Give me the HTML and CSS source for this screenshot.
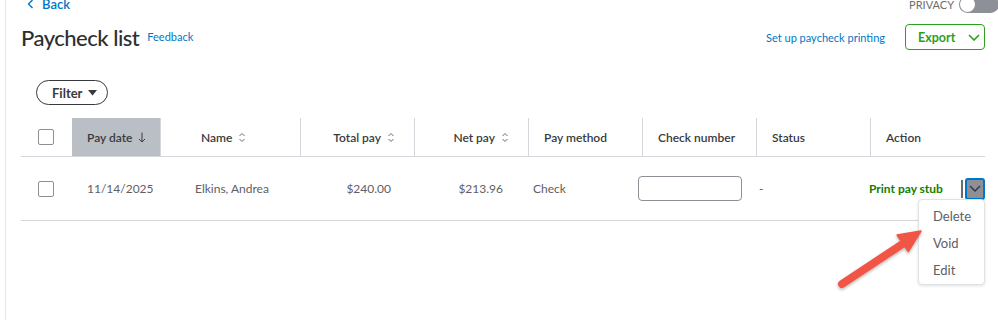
FILE: index.html
```html
<!DOCTYPE html>
<html lang="en">

<head>
    <meta charset="UTF-8">
    <meta name="viewport" content="width=device-width, initial-scale=1.0">
    <title>Paycheck list</title>
    <link rel="stylesheet" href="styles.css">
</head>

<body>

    <div class="page">

        <div class="topbar">
            <a href="#" class="back">
                <svg width="7" height="10" viewBox="0 0 7 10"><path d="M5.5 1 L1.5 5 L5.5 9" fill="none" stroke="#0077c5" stroke-width="1.4"/></svg>
                Back
            </a>
            <div class="privacy">
                <span>PRIVACY</span>
                <div class="toggle"><div class="knob"></div></div>
            </div>
        </div>

        <div class="title-row">
            <h1>Paycheck list</h1>
            <a href="#" class="feedback">Feedback</a>
            <a href="#" class="setup">Set up paycheck printing</a>
            <button class="export">Export
                <svg width="12" height="7" viewBox="0 0 12 7"><path d="M1 1 L6 6 L11 1" fill="none" stroke="#2ca01c" stroke-width="1.6"/></svg>
            </button>
        </div>

        <button class="filter">Filter
            <svg width="9" height="6" viewBox="0 0 9 6"><path d="M0 0 H9 L4.5 5.5 Z" fill="#393a3d"/></svg>
        </button>

        <div class="table">
            <div class="thead">
                <div class="th"><span class="checkbox"></span></div>
                <div class="th sorted">Pay date
                    <svg width="8" height="11" viewBox="0 0 8 11"><path d="M4 0.5 V10 M1 7 L4 10 L7 7" fill="none" stroke="#393a3d" stroke-width="1"/></svg>
                </div>
                <div class="th line name-h">Name
                    <svg class="sort" width="8" height="11" viewBox="0 0 8 11"><path d="M1.5 4 L4 1.5 L6.5 4 M1.5 7 L4 9.5 L6.5 7" fill="none" stroke="#6b6c72" stroke-width="1"/></svg>
                </div>
                <div class="th line right">Total pay
                    <svg class="sort" width="8" height="11" viewBox="0 0 8 11"><path d="M1.5 4 L4 1.5 L6.5 4 M1.5 7 L4 9.5 L6.5 7" fill="none" stroke="#6b6c72" stroke-width="1"/></svg>
                </div>
                <div class="th line right">Net pay
                    <svg class="sort" width="8" height="11" viewBox="0 0 8 11"><path d="M1.5 4 L4 1.5 L6.5 4 M1.5 7 L4 9.5 L6.5 7" fill="none" stroke="#6b6c72" stroke-width="1"/></svg>
                </div>
                <div class="th line">Pay method</div>
                <div class="th line">Check number</div>
                <div class="th line">Status</div>
                <div class="th line">Action</div>
            </div>

            <div class="trow">
                <div class="td"><span class="checkbox"></span></div>
                <div class="td">11/14/2025</div>
                <div class="td">Elkins, Andrea</div>
                <div class="td right">$240.00</div>
                <div class="td right">$213.96</div>
                <div class="td">Check</div>
                <div class="td"><input type="text" class="check-input"></div>
                <div class="td">-</div>
                <div class="td action">
                    <a href="#" class="print">Print pay stub</a>
                    <span class="divider"></span>
                    <button class="more">
                        <svg width="12" height="7" viewBox="0 0 12 7"><path d="M1 1 L6 6 L11 1" fill="none" stroke="#393a3d" stroke-width="1.5"/></svg>
                    </button>
                </div>
            </div>
        </div>

    </div>

    <div class="menu">
        <div class="menu-item">Delete</div>
        <div class="menu-item">Void</div>
        <div class="menu-item">Edit</div>
    </div>

    <svg class="arrow" width="100" height="75" viewBox="0 0 100 75">
        <defs>
            <filter id="sh" x="-20%" y="-20%" width="140%" height="140%">
                <feDropShadow dx="0" dy="1.5" stdDeviation="1.5" flood-color="#000" flood-opacity="0.3"/>
            </filter>
        </defs>
        <g filter="url(#sh)" fill="#f05545" stroke="#f05545">
            <path d="M12 62 L74 21" stroke-width="8" stroke-linecap="round"/>
            <path d="M91 9 L78.3 29.6 L67.1 13 Z" stroke-width="1.5" stroke-linejoin="round"/>
        </g>
    </svg>

</body>

</html>
```

FILE: styles.css
```css
body {
    margin: 0;
    font-family: Lato, "Open Sans", sans-serif;
    background-color: #fff;
    color: #393a3d;
    position: relative;
    height: 328px;
    overflow: hidden;
}

.page {
    margin-left: 5px;
    border-left: 1px solid #e3e5e8;
    padding-left: 15px;
    padding-right: 13px;
    height: 328px;
}

.topbar {
    display: flex;
    justify-content: space-between;
    align-items: center;
    height: 24px;
    margin-top: -8px;
}

.back {
    display: flex;
    align-items: center;
    gap: 8px;
    margin-left: 6px;
    font-size: 13px;
    font-weight: 600;
    color: #0077c5;
    text-decoration: none;
}

.privacy {
    display: flex;
    align-items: center;
    gap: 5px;
    margin-right: -14px;
    font-size: 11px;
    color: #6b6c72;
}

.toggle {
    width: 40px;
    height: 17px;
    border-radius: 9px;
    background-color: #8d9096;
    position: relative;
}

.knob {
    position: absolute;
    left: 1px;
    top: 1px;
    width: 15px;
    height: 15px;
    border-radius: 50%;
    background-color: #fff;
}

.title-row {
    display: flex;
    align-items: center;
    height: 26px;
    margin-top: 8px;
}

.title-row h1 {
    margin: 0;
    font-size: 22px;
    font-weight: 500;
    letter-spacing: -0.5px;
    color: #2d2e31;
}

.feedback {
    margin-left: 8px;
    margin-top: -1px;
    font-size: 11px;
    color: #0077c5;
    text-decoration: none;
}

.setup {
    margin-left: auto;
    margin-right: 20px;
    font-size: 11px;
    color: #0077c5;
    text-decoration: none;
}

.export {
    display: flex;
    align-items: center;
    gap: 13px;
    box-sizing: border-box;
    width: 80px;
    height: 26px;
    padding: 0 0 0 12px;
    border: 1.5px solid #2ca01c;
    border-radius: 4px;
    background-color: #fff;
    color: #2ca01c;
    font-family: inherit;
    font-size: 12.5px;
    font-weight: 700;
}

.filter {
    display: flex;
    align-items: center;
    gap: 6px;
    box-sizing: border-box;
    margin-top: 30px;
    margin-left: 15px;
    width: 72px;
    height: 25px;
    padding: 0 0 0 15px;
    border: 1.5px solid #393a3d;
    border-radius: 13px;
    background-color: #fff;
    color: #393a3d;
    font-family: inherit;
    font-size: 13px;
    font-weight: 700;
}

.table {
    margin-top: 13px;
    width: 964px;
}

.thead {
    display: grid;
    grid-template-columns: 51px 88px 140px 114px 114px 114px 114px 114px 115px;
    height: 38px;
    border-bottom: 1px solid #d4d7dc;
}

.th {
    display: flex;
    align-items: center;
    gap: 6px;
    padding-left: 15px;
    font-size: 12px;
    font-weight: 600;
    color: #393a3d;
}

.th.sorted {
    background-color: #babec5;
}

.th.line {
    border-left: 1px solid #d4d7dc;
}

.th.name-h {
    padding-left: 40px;
}

.th.right {
    justify-content: flex-end;
    padding-left: 0;
    padding-right: 19px;
}

.th:first-child,
.td:first-child {
    padding-left: 17px;
}

.checkbox {
    display: inline-block;
    width: 14px;
    height: 14px;
    border: 1px solid #8d9096;
    border-radius: 2px;
    background-color: #fff;
}

.trow {
    display: grid;
    grid-template-columns: 51px 108px 120px 106px 112px 105px 121px 110px 131px;
    height: 63px;
    border-bottom: 1px solid #d4d7dc;
}

.td {
    display: flex;
    align-items: center;
    padding-left: 15px;
    font-size: 12px;
    color: #5e6066;
}

.td.right {
    justify-content: flex-end;
    padding-left: 0;
    padding-right: 15px;
}

.check-input {
    width: 104px;
    height: 25px;
    box-sizing: border-box;
    border: 1px solid #8d9096;
    border-radius: 4px;
}

.print {
    white-space: nowrap;
    font-size: 12px;
    font-weight: 700;
    color: #108000;
    text-decoration: none;
}

.divider {
    width: 2px;
    height: 18px;
    margin-left: auto;
    background-color: #6b6c72;
}

.more {
    display: flex;
    align-items: center;
    justify-content: center;
    box-sizing: border-box;
    width: 20px;
    height: 22px;
    margin-left: 2px;
    padding: 0;
    border: 2px solid #0077c5;
    border-radius: 3px;
    background-color: #8d9096;
}

.menu {
    position: absolute;
    left: 918px;
    top: 199px;
    width: 67px;
    height: 86px;
    box-sizing: border-box;
    padding-top: 3px;
    border: 1px solid #e0e2e5;
    border-radius: 4px;
    background-color: #fff;
    box-shadow: 0 1px 3px rgba(0, 0, 0, 0.12);
}

.menu-item {
    height: 27px;
    line-height: 27px;
    padding-left: 14px;
    font-size: 13px;
    color: #5e6066;
}

.arrow {
    position: absolute;
    left: 830px;
    top: 222px;
}
```
